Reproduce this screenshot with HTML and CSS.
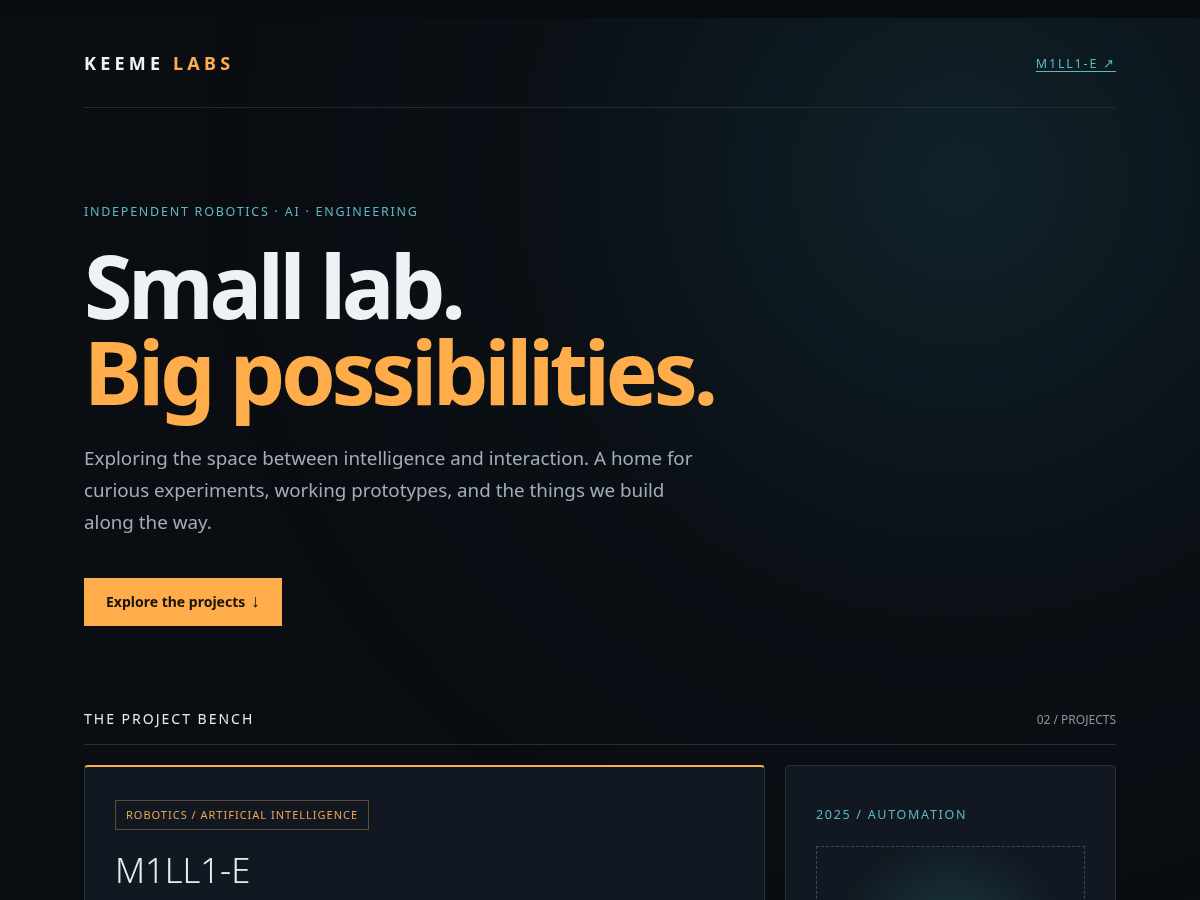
FILE: index.html
```html
<!DOCTYPE html>
<html lang="en">
<head>
    <meta charset="UTF-8">
    <meta name="viewport" content="width=device-width, initial-scale=1.0">
    <title>Keeme Labs</title>
    <link rel="stylesheet" href="styles.css">
</head>
<body>

<div class="page">
    <header class="site-header">
        <div class="logo">KEEME <span>LABS</span></div>
        <a class="header-link" href="#m1ll1e">M1LL1-E ↗</a>
    </header>

    <section class="hero">
        <p class="eyebrow">INDEPENDENT ROBOTICS · AI · ENGINEERING</p>
        <h1>Small lab.<br><span>Big possibilities.</span></h1>
        <p class="lead">Exploring the space between intelligence and interaction. A home for curious experiments, working prototypes, and the things we build along the way.</p>
        <a class="btn" href="#projects">Explore the projects <span class="arrow">↓</span></a>
    </section>

    <section class="bench" id="projects">
        <div class="bench-head">
            <h2>THE PROJECT BENCH</h2>
            <span class="count">02 / PROJECTS</span>
        </div>

        <div class="cards">
            <article class="card card-main" id="m1ll1e">
                <span class="tag">ROBOTICS / ARTIFICIAL INTELLIGENCE</span>
                <h3>M1LL1-E</h3>
            </article>
            <article class="card card-side">
                <p class="meta">2025 / AUTOMATION</p>
                <div class="preview"></div>
            </article>
        </div>
    </section>
</div>

</body>
</html>
```

FILE: styles.css
```css
html {
    background: #080b0f;
}
body {
    margin: 0;
    font-family: "Noto Sans", Arial, sans-serif;
    color: #e9edf2;
    background: #0a0d12;
    min-height: 100vh;
    margin-top: 18px;
    position: relative;
}
body::before {
    content: "";
    position: fixed;
    top: 18px;
    left: 0;
    right: 0;
    bottom: 0;
    background: radial-gradient(circle 760px at 960px 160px, rgba(24, 60, 70, 0.45), rgba(14, 30, 38, 0.2) 55%, rgba(10, 13, 18, 0) 100%);
    pointer-events: none;
}
.page {
    position: relative;
    padding: 0 84px;
}
a {
    text-decoration: none;
}

.site-header {
    display: flex;
    justify-content: space-between;
    align-items: center;
    padding: 33px 0 32px;
    border-bottom: 1px solid #232b33;
}
.logo {
    font-size: 18px;
    font-weight: 700;
    letter-spacing: 4.2px;
    line-height: 24px;
    color: #eef1f5;
}
.logo span {
    color: #ffad4a;
}
.header-link {
    font-size: 12.5px;
    letter-spacing: 1.8px;
    color: #5cb8c3;
    text-decoration: underline;
    text-underline-offset: 3px;
}

.hero {
    padding: 95px 0 0;
}
.eyebrow {
    margin: 0;
    font-size: 12.5px;
    letter-spacing: 1.75px;
    color: #5cb8c3;
    line-height: 18px;
}
.hero h1 {
    margin: 21px 0 0;
    font-size: 88px;
    font-weight: 700;
    line-height: 86px;
    letter-spacing: -4.4px;
    color: #eef1f6;
}
.hero h1 span {
    color: #ffad4a;
}
.lead {
    margin: 28px 0 0;
    max-width: 630px;
    font-size: 18.8px;
    line-height: 32px;
    color: #a3adb9;
}
.btn {
    display: inline-block;
    margin-top: 40px;
    padding: 13px 22px;
    background: #ffad4a;
    color: #1b1309;
    font-size: 14px;
    font-weight: 700;
    line-height: 22px;
}
.arrow {
    font-size: 18px;
    line-height: 14px;
    margin-left: 2px;
}

.bench {
    padding-top: 82px;
}
.bench-head {
    display: flex;
    justify-content: space-between;
    align-items: center;
    padding-bottom: 14px;
    border-bottom: 1px solid #262e36;
}
.bench-head h2 {
    margin: 0;
    font-size: 14px;
    font-weight: 400;
    letter-spacing: 2px;
    color: #e6e9ee;
    line-height: 22px;
}
.count {
    font-size: 12px;
    color: #8a939f;
}

.cards {
    display: grid;
    grid-template-columns: 1fr 331px;
    gap: 20px;
    margin-top: 20px;
}
.card {
    background: #111821;
    border: 1px solid #29313a;
    border-radius: 4px;
    padding: 34px 30px 40px;
    min-height: 300px;
}
.card-main {
    border-top: 2px solid #ffad4a;
    padding-top: 33px;
}
.tag {
    display: inline-block;
    padding: 6px 10px;
    border: 1px solid #5e4b34;
    color: #f0a64c;
    font-size: 11px;
    letter-spacing: 1px;
    line-height: 16px;
}
.card h3 {
    margin: 16px 0 0;
    font-size: 34.5px;
    font-weight: 300;
    color: #e8ecf1;
    line-height: 48px;
}
.meta {
    margin: 6px 0 0;
    font-size: 12.5px;
    letter-spacing: 1.7px;
    color: #5cb8c3;
    line-height: 18px;
}
.preview {
    margin-top: 22px;
    height: 200px;
    border: 1px dashed #3b4b55;
    background: radial-gradient(ellipse 110px 90px at 50% 40%, rgba(32, 78, 86, 0.55), rgba(17, 24, 33, 0) 100%);
}
```
